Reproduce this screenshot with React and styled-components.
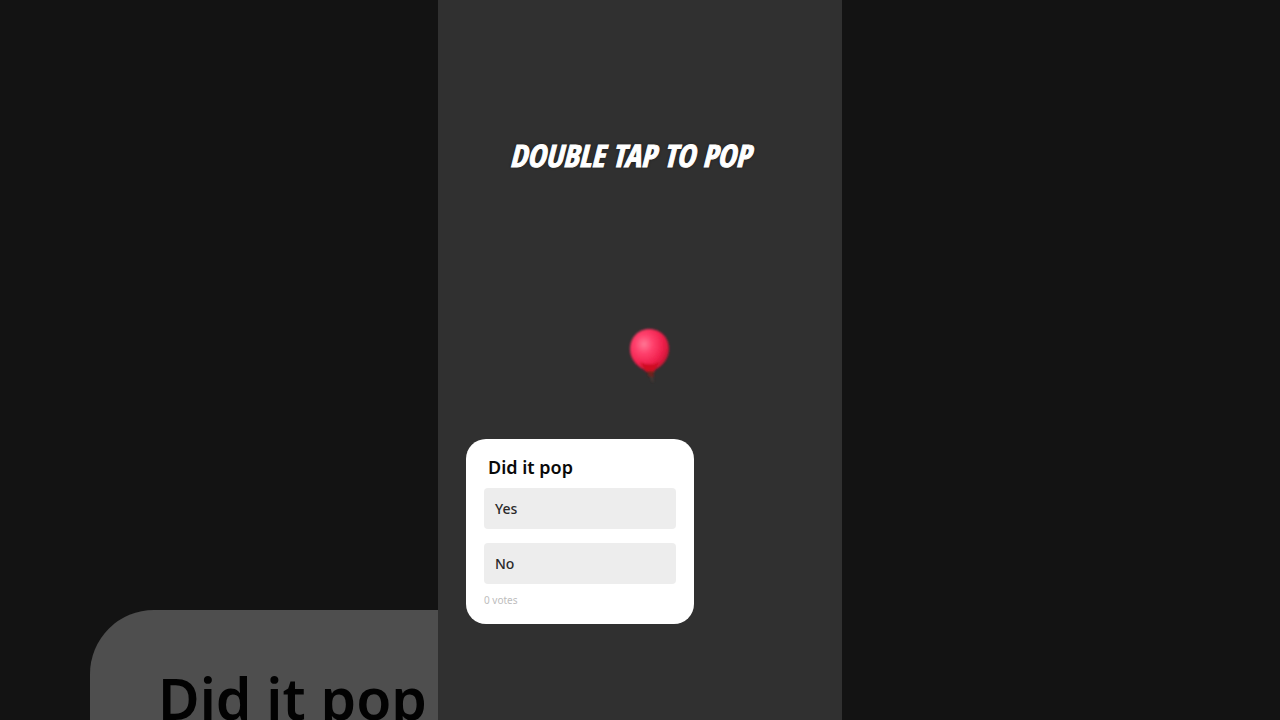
import styled, { createGlobalStyle } from "styled-components"

const options = ["Yes", "No"]

const Balloon = () => (
    <BalloonArt viewBox="0 0 56 64" aria-hidden="true">
        <defs>
            <radialGradient id="shine" cx="0.36" cy="0.36" r="0.75">
                <stop offset="0" stopColor="#ff7795" />
                <stop offset="0.3" stopColor="#ff416d" />
                <stop offset="0.65" stopColor="#f0204c" />
                <stop offset="1" stopColor="#b50f28" />
            </radialGradient>
            <filter id="soft">
                <feGaussianBlur stdDeviation="1.2" />
            </filter>
        </defs>
        <g filter="url(#soft)">
            <path d="M29 51 Q30 57 32 62" fill="none" stroke="#4a3a34" strokeWidth="2" />
            <path
                d="M28 9 C40 9 48 18 48 29 C48 40 40 47 32 51 L25 51 C17 47 9 40 9 29 C9 18 17 9 28 9 Z"
                fill="url(#shine)"
            />
            <path d="M19 42 Q29 47 38 42 L33 52 L25 52 Z" fill="#cf0a22" />
            <path d="M27 51 L32 51 L33 57 L27 56 Z" fill="#71201f" />
        </g>
    </BalloonArt>
)

const App = () => {
    const renderOptions = options.map(option => (
        <Option key={option} type="button">{option}</Option>
    ))

    return (
        <>
            <GlobalStyle />
            <Page>
                <Side>
                    <BackCard aria-hidden="true">Did it pop</BackCard>
                </Side>
                <Story>
                    <Title>DOUBLE TAP TO POP</Title>
                    <Balloon />
                    <Poll>
                        <Question>Did it pop</Question>
                        <Options>{renderOptions}</Options>
                        <Votes>0 votes</Votes>
                    </Poll>
                </Story>
                <Side />
            </Page>
        </>
    )
}

const GlobalStyle = createGlobalStyle`
    * {
        box-sizing: border-box;
    }

    body {
        margin: 0;
        background: #131313;
        font-family: "Noto Sans", sans-serif;
    }
`

const Page = styled.div`
    display: flex;
    height: 100vh;
    overflow: hidden;
`

const Side = styled.div`
    flex: 1;
    min-width: 0;
    display: flex;
    align-items: flex-end;
    padding-left: 90px;
    overflow: hidden;
    background: #131313;
`

const BackCard = styled.div`
    flex: 1 0 100%;
    height: 110px;
    padding: 52px 0 0 68px;
    border-radius: 64px 0 0 0;
    background: #4e4e4e;
    color: #020202;
    font-size: 57px;
    line-height: 72px;
    font-weight: 600;
    white-space: nowrap;
`

const Story = styled.main`
    flex: 0 0 404px;
    padding: 132px 28px 0;
    background: #303030;
`

const Title = styled.h1`
    margin: 0 20px 0 0;
    color: #fff;
    font-family: "Open Sans Condensed", "Liberation Sans Narrow", sans-serif;
    font-size: 31px;
    line-height: 46px;
    font-weight: 700;
    font-style: italic;
    text-align: center;
    white-space: nowrap;
    -webkit-text-stroke: 1px #fff;
    text-shadow: 0 0 3px #111;
`

const BalloonArt = styled.svg`
    display: block;
    width: 56px;
    height: 64px;
    margin: 142px 0 55px 155px;
`

const Poll = styled.section`
    width: 228px;
    padding: 16px 18px;
    border-radius: 20px;
    background: #fff;
`

const Question = styled.h2`
    margin: 0 4px 8px;
    color: #090909;
    font-size: 18px;
    line-height: 25px;
    font-weight: 600;
`

const Options = styled.div`
    display: grid;
    gap: 14px;
`

const Option = styled.button`
    height: 41px;
    padding: 0 11px;
    border: 0;
    border-radius: 4px;
    background: #ededed;
    color: #2a2a2a;
    font-family: inherit;
    font-size: 14px;
    font-weight: 500;
    text-align: left;
    cursor: pointer;
`

const Votes = styled.div`
    margin-top: 8px;
    color: #bdbdbd;
    font-size: 10px;
    line-height: 16px;
`

export default App
